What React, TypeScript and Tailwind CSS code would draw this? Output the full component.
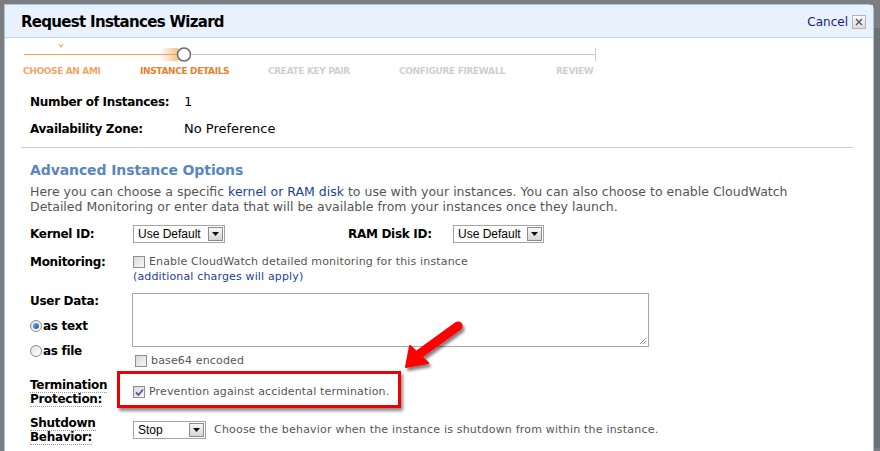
import React from "react";

const vd = "font-['DejaVu_Sans',Verdana,sans-serif]";
const ar = "font-['Liberation_Sans',Arial,sans-serif]";

function Checkbox({ checked }: { checked?: boolean }) {
  return (
    <span className="inline-flex h-[12px] w-[12px] shrink-0 items-center justify-center border border-[#8e8e8e] bg-gradient-to-br from-[#d9d9d9] to-[#f7f7f7]">
      {checked && (
        <svg width="9" height="9" viewBox="0 0 9 9">
          <path d="M1 4.5 L3.5 7 L8 1.5" fill="none" stroke="#4d57a3" strokeWidth="1.8" />
        </svg>
      )}
    </span>
  );
}

function Radio({ checked }: { checked?: boolean }) {
  return (
    <span className="mr-[1px] inline-flex h-[12px] w-[12px] items-center justify-center rounded-full border border-[#8a8a8a] bg-gradient-to-br from-[#e4e4e4] to-white">
      {checked && <span className="h-[6px] w-[6px] rounded-full bg-gradient-to-br from-[#6db3f2] to-[#1b4e9b]" />}
    </span>
  );
}

function Select({ value, width }: { value: string; width: string }) {
  return (
    <div className={`flex h-[18px] shrink-0 items-center border border-[#a5a5a5] bg-white ${width}`}>
      <span className={`min-w-0 flex-1 overflow-hidden whitespace-nowrap pl-[4px] text-[12px] leading-none text-black ${ar}`}>{value}</span>
      <span className="mr-[1px] flex h-[14px] w-[15px] shrink-0 items-center justify-center border border-[#8c8c8c] bg-gradient-to-b from-[#f6f6f6] to-[#d6d6d6]">
        <svg width="7" height="4" viewBox="0 0 7 4">
          <path d="M0 0 H7 L3.5 4 Z" fill="#111" />
        </svg>
      </span>
    </div>
  );
}

function Label({ children }: { children: React.ReactNode }) {
  return <div className={`w-[103px] shrink-0 text-[12px] font-bold tracking-[-0.3px] text-black ${vd}`}>{children}</div>;
}

export default function App() {
  return (
    <div className="relative h-[451px] w-[880px] overflow-hidden bg-[#7b7d80] pl-[4px] pt-[4px]">
      <div className="absolute left-[874px] top-[28px] h-[420px] w-[6px] bg-[#6c7177]" />
      <div className={`relative w-[870px] rounded-tr-[6px] border border-[#a2c6ea] bg-white ${vd}`}>
        {/* header */}
        <div className="flex h-[33px] items-center justify-between border-b border-[#bad8f4] bg-[#e9f1fc] pl-[16px] pr-[7px] pt-[2px]">
          <h1 className="text-[15px] font-bold tracking-[-0.7px] text-black">Request Instances Wizard</h1>
          <div className="flex items-center gap-[4px]">
            <a className="text-[12px] text-[#1a1a8c]">Cancel</a>
            <span className="flex h-[14px] w-[14px] items-center justify-center border border-[#b5b5b5] bg-gradient-to-b from-[#fafafa] to-[#dcdcdc]">
              <svg width="8" height="8" viewBox="0 0 8 8">
                <path d="M1 1 L7 7 M7 1 L1 7" stroke="#555" strokeWidth="1.4" />
              </svg>
            </span>
          </div>
        </div>

        {/* stepper */}
        <div className="h-[44px]">
          <svg width="600" height="27" className="block">
            <defs>
              <linearGradient id="glow" x1="0" x2="1">
                <stop offset="0" stopColor="#f5a95a" stopOpacity="0" />
                <stop offset="1" stopColor="#f5a95a" stopOpacity="0.8" />
              </linearGradient>
            </defs>
            <path d="M54 6 L56 9 L58 6" fill="none" stroke="#f0a860" strokeWidth="1.2" />
            <line x1="19" y1="16.5" x2="172" y2="16.5" stroke="#f0a355" strokeWidth="1" />
            <rect x="155" y="10" width="20" height="13" fill="url(#glow)" rx="4" />
            <line x1="187" y1="16.5" x2="590" y2="16.5" stroke="#c9c9c9" strokeWidth="1" />
            <line x1="590.5" y1="10" x2="590.5" y2="23" stroke="#c9c9c9" strokeWidth="1" />
            <circle cx="179" cy="16.5" r="6.5" fill="white" stroke="#6a6a6a" strokeWidth="1.5" />
          </svg>
          <div className="flex pl-[18px] text-[9px] font-bold leading-[12px] tracking-[-0.35px]">
            <span className="w-[117px] text-[#f2a565]">CHOOSE AN AMI</span>
            <span className="w-[128px] text-[#e6822b]">INSTANCE DETAILS</span>
            <span className="w-[131px] text-[#cfcfcf]">CREATE KEY PAIR</span>
            <span className="w-[157px] text-[#cfcfcf]">CONFIGURE FIREWALL</span>
            <span className="text-[#cfcfcf]">REVIEW</span>
          </div>
        </div>

        {/* instance summary */}
        <div className="pl-[25px]">
          <div className="mt-[12px] flex h-[16px] items-center">
            <div className="w-[154px] text-[12px] font-bold tracking-[-0.3px]">Number of Instances:</div>
            <span className="text-[13px]">1</span>
          </div>
          <div className="mt-[11px] flex h-[16px] items-center">
            <div className="w-[154px] text-[12px] font-bold tracking-[-0.3px]">Availability Zone:</div>
            <span className="text-[13px]">No Preference</span>
          </div>
        </div>

        <div className="ml-[16px] mt-[10px] h-px w-[832px] bg-[#cccccc]" />

        {/* advanced */}
        <div className="pl-[25px]">
          <h2 className="mt-[13px] h-[18px] text-[14px] font-bold leading-[18px] tracking-[-0.1px] text-[#5a86bf]">Advanced Instance Options</h2>
          <p className="mt-[5px] text-[12.5px] leading-[15px] text-[#555]">
            Here you can choose a specific <a className="text-[#1c3f94]">kernel or RAM disk</a> to use with your instances. You can also choose to enable CloudWatch
            <br />
            Detailed Monitoring or enter data that will be available from your instances once they launch.
          </p>

          {/* kernel */}
          <div className="mt-[10px] flex h-[19px] items-center">
            <Label>Kernel ID:</Label>
            <Select value="Use Default" width="w-[92px]" />
            <div className="ml-[123px] w-[105px] text-[12px] font-bold tracking-[-0.3px]">RAM Disk ID:</div>
            <Select value="Use Default" width="w-[91px]" />
          </div>

          {/* monitoring */}
          <div className="mt-[11px] flex">
            <Label>
              <div className="leading-[16px]">Monitoring:</div>
            </Label>
            <div className="text-[11px] tracking-[0.15px]">
              <div className="flex h-[16px] items-center gap-[4px] text-[#555]">
                <Checkbox />
                <span>Enable CloudWatch detailed monitoring for this instance</span>
              </div>
              <div className="h-[14px] leading-[14px] text-[#1c3f94]">(additional charges will apply)</div>
            </div>
          </div>

          {/* user data */}
          <div className="mt-[9px] flex">
            <Label>
              <div className="leading-[16px]">User Data:</div>
              <div className="mt-[9px] flex h-[16px] items-center">
                <Radio checked />
                <span>as text</span>
              </div>
              <div className="mt-[9px] flex h-[16px] items-center">
                <Radio />
                <span>as file</span>
              </div>
            </Label>
            <div className="-ml-[1px]">
              <div className="relative h-[54px] w-[517px] border border-[#a8a8a8] bg-white">
                <svg width="8" height="8" className="absolute bottom-[1px] right-[1px]">
                  <path d="M7 1 L1 7 M7 4 L4 7 M7 6.5 L6.5 7" stroke="#888" strokeWidth="1" />
                </svg>
              </div>
              <div className="ml-[3px] mt-[7px] flex h-[14px] items-center gap-[4px] text-[11px] tracking-[0.15px] text-[#555]">
                <Checkbox />
                <span>base64 encoded</span>
              </div>
            </div>
          </div>

          {/* termination */}
          <div className="mt-[10px] flex">
            <Label>
              <div className="leading-[14px]">
                <span className="border-b border-dotted border-[#999]">Termination</span>
                <br />
                <span className="border-b border-dotted border-[#999]">Protection:</span>
              </div>
            </Label>
            <div className="flex h-[28px] items-center gap-[4px] text-[11px] tracking-[0.15px] text-[#555]">
              <Checkbox checked />
              <span>Prevention against accidental termination.</span>
            </div>
          </div>

          {/* shutdown */}
          <div className="mt-[10px] flex">
            <Label>
              <div className="leading-[14px]">
                <span className="border-b border-dotted border-[#999]">Shutdown</span>
                <br />
                <span className="border-b border-dotted border-[#999]">Behavior:</span>
              </div>
            </Label>
            <div className="flex h-[28px] items-center gap-[8px]">
              <Select value="Stop" width="w-[73px]" />
              <span className="text-[11px] tracking-[0.2px] text-[#555]">Choose the behavior when the instance is shutdown from within the instance.</span>
            </div>
          </div>
          <div className="h-[20px]" />
        </div>
      </div>

      {/* annotation overlays */}
      <div className="absolute left-[117px] top-[371px] h-[37px] w-[284px] border-[3px] border-[#ee0000] shadow-[2px_3px_3px_rgba(0,0,0,0.45)]" />
      <svg className="absolute left-[398px] top-[315px]" width="75" height="60" viewBox="398 315 75 60">
        <defs>
          <filter id="sh" x="-20%" y="-20%" width="150%" height="150%">
            <feDropShadow dx="2" dy="3" stdDeviation="1.5" floodColor="#000" floodOpacity="0.5" />
          </filter>
        </defs>
        <g filter="url(#sh)">
          <line x1="458" y1="326" x2="418" y2="355" stroke="#ff0000" strokeWidth="9" strokeLinecap="round" />
          <path d="M406 367 L410 346 L428 363 Z" fill="#ff0000" stroke="#ff0000" strokeWidth="2" strokeLinejoin="round" />
        </g>
      </svg>
    </div>
  );
}
